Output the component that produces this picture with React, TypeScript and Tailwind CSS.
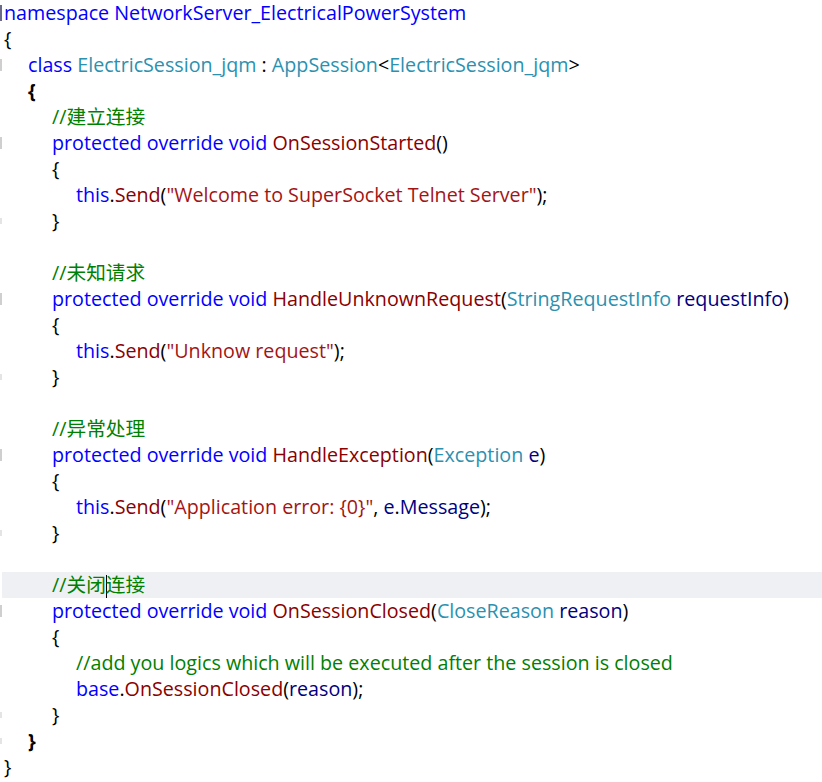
import React from "react";

type Tok = [string, string];

const K = "text-[#0000ff]";
const M = "text-[#8b0000]";
const T = "text-[#2b91af]";
const P = "text-[#000080]";
const S = "text-[#a31515]";
const C = "text-[#008000]";
const N = "text-black";

interface Line {
  indent: number;
  toks: Tok[];
  bold?: boolean;
  mark?: "dark" | "light" | "faint";
}

const lines: Line[] = [
  { indent: 0, mark: "dark", toks: [[K, "namespace "], [K, "NetworkServer_ElectricalPowerSystem"]] },
  { indent: 0, toks: [[N, "{"]] },
  {
    indent: 1,
    mark: "light",
    toks: [[K, "class "], [T, "ElectricSession_jqm"], [N, " : "], [T, "AppSession"], [N, "<"], [T, "ElectricSession_jqm"], [N, ">"]],
  },
  { indent: 1, bold: true, toks: [[N, "{"]] },
  { indent: 2, toks: [[C, "//建立连接"]] },
  { indent: 2, mark: "light", toks: [[K, "protected override void "], [M, "OnSessionStarted"], [N, "()"]] },
  { indent: 2, toks: [[N, "{"]] },
  { indent: 3, toks: [[K, "this"], [N, "."], [M, "Send"], [N, "("], [S, "\"Welcome to SuperSocket Telnet Server\""], [N, ");"]] },
  { indent: 2, mark: "faint", toks: [[N, "}"]] },
  { indent: 2, toks: [] },
  { indent: 2, toks: [[C, "//未知请求"]] },
  {
    indent: 2,
    mark: "light",
    toks: [[K, "protected override void "], [M, "HandleUnknownRequest"], [N, "("], [T, "StringRequestInfo"], [P, " requestInfo"], [N, ")"]],
  },
  { indent: 2, toks: [[N, "{"]] },
  { indent: 3, toks: [[K, "this"], [N, "."], [M, "Send"], [N, "("], [S, "\"Unknow request\""], [N, ");"]] },
  { indent: 2, mark: "faint", toks: [[N, "}"]] },
  { indent: 2, toks: [] },
  { indent: 2, toks: [[C, "//异常处理"]] },
  {
    indent: 2,
    mark: "light",
    toks: [[K, "protected override void "], [M, "HandleException"], [N, "("], [T, "Exception"], [P, " e"], [N, ")"]],
  },
  { indent: 2, toks: [[N, "{"]] },
  {
    indent: 3,
    toks: [[K, "this"], [N, "."], [M, "Send"], [N, "("], [S, "\"Application error: {0}\""], [N, ", "], [P, "e"], [N, "."], [P, "Message"], [N, ");"]],
  },
  { indent: 2, mark: "faint", toks: [[N, "}"]] },
  { indent: 2, toks: [] },
  { indent: 2, toks: [[C, "//关闭连接"]] },
  {
    indent: 2,
    mark: "light",
    toks: [[K, "protected override void "], [M, "OnSessionClosed"], [N, "("], [T, "CloseReason"], [P, " reason"], [N, ")"]],
  },
  { indent: 2, toks: [[N, "{"]] },
  { indent: 3, toks: [[C, "//add you logics which will be executed after the session is closed"]] },
  { indent: 3, toks: [[K, "base"], [N, "."], [M, "OnSessionClosed"], [N, "("], [P, "reason"], [N, ")"], [N, ";"]] },
  { indent: 2, mark: "faint", toks: [[N, "}"]] },
  { indent: 1, bold: true, mark: "faint", toks: [[N, "}"]] },
  { indent: 0, toks: [[N, "}"]] },
];

// gutter is 2px wide, so indents are measured from x=2
const PAD = ["pl-[2px]", "pl-[26px]", "pl-[50px]", "pl-[74px]"];

const MARK: Record<string, string> = {
  dark: "h-[16px] w-[2px] bg-[#6a6a8a]",
  light: "h-[12px] w-[2px] bg-[#cfcfcf]",
  faint: "h-[6px] w-[2px] bg-[#e4e4e4]",
};

function CodeLine({ line, index }: { line: Line; index: number }) {
  const current = index === 22;
  return (
    <div className="flex h-[26px] items-stretch">
      {/* outlining gutter */}
      <div className="flex w-[2px] shrink-0 items-center">
        {line.mark && <span className={MARK[line.mark]} />}
      </div>
      <div
        className={`flex flex-1 items-center whitespace-pre ${PAD[line.indent]} ${line.bold ? "font-bold" : ""} ${
          current ? "bg-[#eef0f4]" : ""
        }`}
      >
        {current ? (
          <span className={C}>
            //关闭
            <span className="-mr-px inline-block h-[23px] w-px bg-black align-middle" />
            连接
          </span>
        ) : (
          line.toks.map(([cls, text], i) => (
            <span key={i} className={cls}>
              {text}
            </span>
          ))
        )}
      </div>
    </div>
  );
}

export default function App() {
  return (
    <div
      className="h-[782px] w-[822px] overflow-hidden bg-white text-[19.7px] leading-[26px]"
      style={{ fontFamily: '"Open Sans", "Noto Sans CJK SC", sans-serif' }}
    >
      <div className="flex flex-col">
        {lines.map((line, i) => (
          <CodeLine key={i} line={line} index={i} />
        ))}
      </div>
    </div>
  );
}
